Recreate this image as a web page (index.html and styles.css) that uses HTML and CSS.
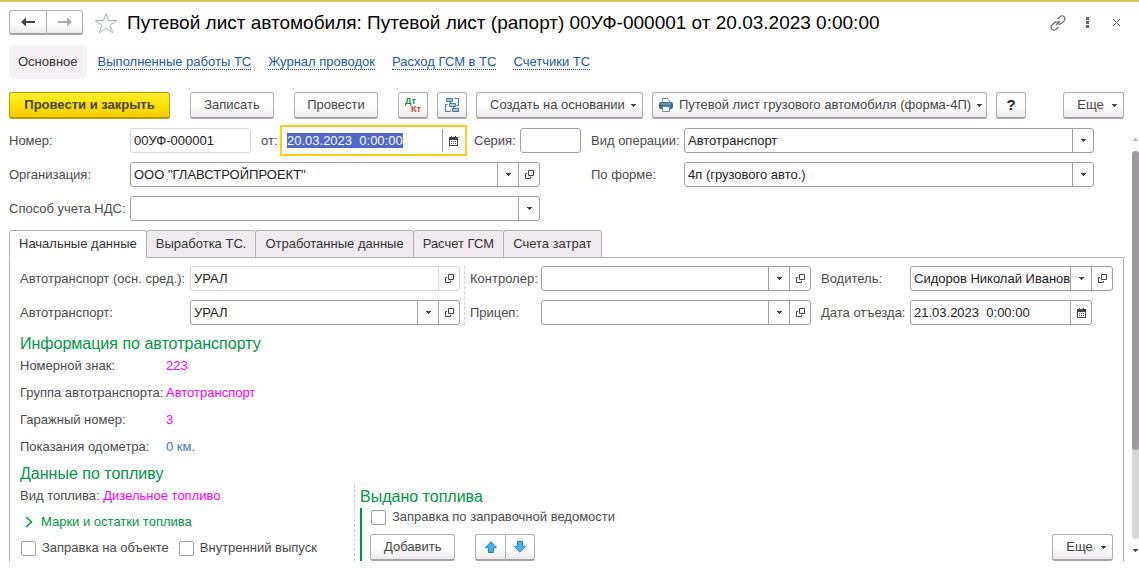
FILE: index.html
```html
<!DOCTYPE html>
<html lang="ru">
<head>
<meta charset="utf-8">
<title>Путевой лист автомобиля</title>
<link rel="stylesheet" href="styles.css">
</head>
<body>
<svg class="defs" aria-hidden="true">
  <symbol id="caret" viewBox="0 0 5 3"><path d="M0 0h5v1H4v1H3v1H2V2H1V1H0z" fill="currentColor"/></symbol>
  <symbol id="open" viewBox="0 0 9 9"><path d="M3.500.5h5v5h-5zM2 3.500H.5v5h5V7" fill="none" stroke="currentColor"/></symbol>
  <symbol id="calendar" viewBox="0 0 9 10"><path d="M0 1h2V0h1v1h3V0h1v1h2v9H0zM1 4v5h7V4z" fill="currentColor" fill-rule="evenodd"/><path d="M2 5h1v1H2zM4 5h1v1H4zM6 5h1v1H6zM2 7h1v1H2zM4 7h1v1H4zM6 7h1v1H6z" fill="currentColor"/></symbol>
  <symbol id="arrow" viewBox="0 0 14 10"><path d="M0 5L5 .5V4h9v2H5v3.500z" fill="currentColor"/></symbol>
  <symbol id="move" viewBox="0 0 12 12"><path d="M6 .8L11.200 6v.8H8.500v4.700h-5V6.800H.8V6z" fill="#45b0f0" stroke="#2f7fb5"/></symbol>
</svg>
<div class="window">
  <header class="header">
    <div class="pair history">
      <button class="btn" aria-label="Назад"><svg class="i-arrow"><use href="#arrow"/></svg></button>
      <button class="btn forward" aria-label="Вперед"><svg class="i-arrow flip"><use href="#arrow"/></svg></button>
    </div>
    <button class="plain star" aria-label="В избранное"><svg width="24" height="22" viewBox="0 0 24 22"><path d="M12 1.500l2.600 7h8l-6.400 4.600 2.500 7.700L12 16l-6.700 4.800 2.500-7.700L1.400 8.500h8z" fill="none" stroke="#a9b0bd"/></svg></button>
    <h1 class="title">Путевой лист автомобиля: Путевой лист (рапорт) 00УФ-000001 от 20.03.2023 0:00:00</h1>
    <div class="tools">
      <button class="plain" aria-label="Ссылка"><svg width="16" height="16" viewBox="0 0 16 16" fill="none" stroke="#666" stroke-width="1.200"><path d="M7.500 4L10 1.600q2.200-1.700 4 0t.2 4L11.500 8.300q-1.600 1.400-3.200.4M8.500 12L6 14.400q-2.200 1.700-4 0t-.2-4l2.700-2.700q1.600-1.400 3.200-.4M6 10l4-4"/></svg></button>
      <button class="plain" aria-label="Меню"><svg width="3" height="11" viewBox="0 0 3 11"><path d="M0 0h3v3H0zM0 4h3v3H0zM0 8h3v3H0z" fill="#666"/></svg></button>
      <button class="plain" aria-label="Закрыть"><svg width="7" height="7" viewBox="0 0 7 7"><path d="M0 0l7 7M7 0L0 7" stroke="#555"/></svg></button>
    </div>
  </header>

  <nav class="nav">
    <span class="current">Основное</span>
    <a href="#works">Выполненные работы ТС</a>
    <a href="#journal">Журнал проводок</a>
    <a href="#fuel">Расход ГСМ в ТС</a>
    <a href="#counters">Счетчики ТС</a>
  </nav>

  <div class="toolbar">
    <button class="btn primary">Провести и закрыть</button>
    <button class="btn spaced">Записать</button>
    <button class="btn spaced">Провести</button>
    <button class="btn square spaced" aria-label="Проводки"><span class="dtkt"><span class="dt">Дт</span><span class="kt">Кт</span></span></button>
    <button class="btn square" aria-label="Структура"><svg width="15" height="15" viewBox="0 0 15 15" fill="#a9cbe3" stroke="#44789f"><path d="M1.500.5h6v3h-6zM4.500 5.500h6v3h-6zM7.500 10.500h6v3h-6z"/><path d="M9.500.5h4v7h-2M.5 6v7.500h5M5.500 4v1M8.500 9v1M.5 6.500h2" fill="none"/></svg></button>
    <button class="btn menu">Создать на основании<svg class="i-caret"><use href="#caret"/></svg></button>
    <button class="btn menu print"><svg width="14" height="14" viewBox="0 0 14 14"><path d="M3.500 4.500v-4h5l2 2v2" fill="#fff" stroke="#6f8fa8"/><rect y="4" width="14" height="7" rx="2" fill="#376d96"/><path d="M2 6h10" stroke="#9dbdd4"/><path d="M3.500 8.500h7v5h-7z" fill="#fff" stroke="#6f8fa8"/></svg>Путевой лист грузового автомобиля (форма-4П)<svg class="i-caret"><use href="#caret"/></svg></button>
    <button class="btn square help">?</button>
    <button class="btn menu more">Еще<svg class="i-caret"><use href="#caret"/></svg></button>
  </div>

  <div class="scroll">
    <main class="content">
      <div class="form">
        <div class="col left">
          <div class="row">
            <label class="lbl" for="num">Номер:</label>
            <div class="field muted num"><input id="num" value="00УФ-000001" readonly></div>
            <label class="from" for="date">от:</label>
            <div class="field focused"><input id="date" value="20.03.2023  0:00:00" autofocus><button aria-label="Календарь"><svg class="i-cal"><use href="#calendar"/></svg></button></div>
            <label class="series" for="ser">Серия:</label>
            <div class="field grow"><input id="ser"></div>
          </div>
          <div class="row short">
            <label class="lbl" for="org">Организация:</label>
            <div class="field grow"><input id="org" value='ООО "ГЛАВСТРОЙПРОЕКТ"'><button aria-label="Выбрать"><svg class="i-caret"><use href="#caret"/></svg></button><button aria-label="Открыть"><svg class="i-open"><use href="#open"/></svg></button></div>
          </div>
          <div class="row short">
            <label class="lbl" for="vat">Способ учета НДС:</label>
            <div class="field grow"><select id="vat"><option></option></select><span class="mark"><svg class="i-caret"><use href="#caret"/></svg></span></div>
          </div>
        </div>
        <div class="col right">
          <div class="row">
            <label class="lbl" for="op">Вид операции:</label>
            <div class="field grow"><select id="op"><option>Автотранспорт</option></select><span class="mark"><svg class="i-caret"><use href="#caret"/></svg></span></div>
          </div>
          <div class="row">
            <label class="lbl" for="shape">По форме:</label>
            <div class="field grow"><select id="shape"><option>4п (грузового авто.)</option></select><span class="mark"><svg class="i-caret"><use href="#caret"/></svg></span></div>
          </div>
        </div>
      </div>

      <div class="tabs" role="tablist">
        <button class="tab active" role="tab" aria-selected="true">Начальные данные</button>
        <button class="tab" role="tab">Выработка ТС.</button>
        <button class="tab" role="tab">Отработанные данные</button>
        <button class="tab" role="tab">Расчет ГСМ</button>
        <button class="tab" role="tab">Счета затрат</button>
      </div>

      <section class="panel">
        <div class="grid">
          <div class="col vehicle">
            <div class="row">
              <label class="lbl" for="os">Автотранспорт (осн. сред.):</label>
              <div class="field muted grow"><input id="os" value="УРАЛ" readonly><button aria-label="Открыть"><svg class="i-open"><use href="#open"/></svg></button></div>
            </div>
            <div class="row">
              <label class="lbl" for="auto">Автотранспорт:</label>
              <div class="field grow"><input id="auto" value="УРАЛ"><button aria-label="Выбрать"><svg class="i-caret"><use href="#caret"/></svg></button><button aria-label="Открыть"><svg class="i-open"><use href="#open"/></svg></button></div>
            </div>
          </div>
          <div class="col control">
            <div class="row">
              <label class="lbl" for="ctl">Контролер:</label>
              <div class="field grow"><input id="ctl"><button aria-label="Выбрать"><svg class="i-caret"><use href="#caret"/></svg></button><button aria-label="Открыть"><svg class="i-open"><use href="#open"/></svg></button></div>
            </div>
            <div class="row">
              <label class="lbl" for="trl">Прицеп:</label>
              <div class="field grow"><input id="trl"><button aria-label="Выбрать"><svg class="i-caret"><use href="#caret"/></svg></button><button aria-label="Открыть"><svg class="i-open"><use href="#open"/></svg></button></div>
            </div>
          </div>
          <div class="col driver">
            <div class="row">
              <label class="lbl" for="drv">Водитель:</label>
              <div class="field grow"><input id="drv" value="Сидоров Николай Иванов"><button aria-label="Выбрать"><svg class="i-caret"><use href="#caret"/></svg></button><button aria-label="Открыть"><svg class="i-open"><use href="#open"/></svg></button></div>
            </div>
            <div class="row depart">
              <label class="lbl" for="dep">Дата отъезда:</label>
              <div class="field grow"><input id="dep" value="21.03.2023  0:00:00"><button aria-label="Календарь"><svg class="i-cal"><use href="#calendar"/></svg></button></div>
            </div>
          </div>
        </div>

        <h2 class="heading">Информация по автотранспорту</h2>
        <dl class="info">
          <dt>Номерной знак:</dt><dd>223</dd>
          <dt>Группа автотранспорта:</dt><dd>Автотранспорт</dd>
          <dt>Гаражный номер:</dt><dd>3</dd>
          <dt>Показания одометра:</dt><dd class="odo">0 км.</dd>
        </dl>
        <h2 class="heading">Данные по топливу</h2>
        <div class="fuel">
          <div class="stock">
            <p class="kind">Вид топлива: <span class="value">Дизельное топливо</span></p>
            <button class="plain expand"><svg width="8" height="12" viewBox="0 0 8 12"><path d="M1 1l5.500 5L1 11" fill="none" stroke="#009646" stroke-width="1.600"/></svg>Марки и остатки топлива</button>
            <div class="checks">
              <label class="check"><input type="checkbox">Заправка на объекте</label>
              <label class="check"><input type="checkbox">Внутренний выпуск</label>
            </div>
          </div>
          <div class="issued">
            <h2 class="heading">Выдано топлива</h2>
            <div class="group">
              <label class="check"><input type="checkbox">Заправка по заправочной ведомости</label>
              <div class="actions">
                <button class="btn">Добавить</button>
                <div class="pair">
                  <button class="btn" aria-label="Вверх"><svg class="i-move"><use href="#move"/></svg></button>
                  <button class="btn" aria-label="Вниз"><svg class="i-move down"><use href="#move"/></svg></button>
                </div>
                <button class="btn menu more">Еще<svg class="i-caret"><use href="#caret"/></svg></button>
              </div>
            </div>
          </div>
        </div>
      </section>
    </main>
    <div class="scrollbar" aria-hidden="true">
      <svg class="i-caret up"><use href="#caret"/></svg>
      <div class="track"><div class="thumb"></div></div>
      <svg class="i-caret"><use href="#caret"/></svg>
    </div>
  </div>
</div>
<script src="main.js"></script>
</body>
</html>
```
FILE: styles.css
```css
* { box-sizing: border-box; }
body {
  margin: 0;
  background: #fff;
  color: #4a4a4a;
  font: 13px/22px "Liberation Sans", Arial, sans-serif;
}
button, input, select { font: inherit; color: inherit; margin: 0; }
h1, h2, p, dl, dd { margin: 0; font-weight: normal; }
svg { flex: none; display: block; }
.defs { display: none; }
.window { border-top: 2px solid #d9c45f; }

.i-caret { width: 5px; height: 3px; }
.i-open { width: 9px; height: 9px; }
.i-cal { width: 9px; height: 10px; }
.i-arrow { width: 14px; height: 10px; }
.i-move { width: 12px; height: 12px; }
.flip { transform: scaleX(-1); }
.down, .up { transform: scaleY(-1); }

.plain { border: 0; padding: 0; background: none; }
.btn {
  display: flex;
  align-items: center;
  justify-content: center;
  height: 27px;
  padding: 0 13px;
  border: 1px solid #b0b0b0;
  border-bottom: 2px solid #a3a3a3;
  border-radius: 3px;
  background: linear-gradient(#fff 55%, #ece9ec);
  color: #444;
  white-space: nowrap;
}
.pair { display: flex; }
.pair .btn { width: 31px; padding: 0; }
.pair .btn:first-child { border-radius: 3px 0 0 3px; }
.pair .btn:last-child { border-radius: 0 3px 3px 0; border-left: 0; width: 29px; }

.header { display: flex; align-items: center; padding: 8px 19px 0 9px; }
.history .btn { height: 25px; }
.history .btn:first-child { width: 38px; }
.history .btn:last-child { width: 36px; }
.forward { color: #aaa; }
.star { margin: 0 9px 0 11px; }
.title { flex: 1; font-size: 19px; line-height: 25px; color: #000; white-space: nowrap; }
.tools { display: flex; align-items: center; gap: 20px; }
.tools .plain:nth-child(2) { margin-right: 4px; }

.nav { display: flex; align-items: center; gap: 17px; padding: 10px 9px 0; }
.nav .current { padding: 6px 9px; margin-right: -6px; border-radius: 4px; background: #f5f1f5; color: #333; }
.nav a { color: #1a58ab; line-height: 14px; text-decoration: none; border-bottom: 1px dotted #1a58ab; }

.toolbar { display: flex; gap: 9px; padding: 13px 15px 0 9px; }
.toolbar .spaced { margin-left: 11px; }
.toolbar .spaced:not(.square) { min-width: 84px; padding: 0; }
.btn.primary {
  min-width: 161px;
  font-weight: bold;
  border-color: #b79c00;
  background: linear-gradient(#ffee33, #ffe000 50%, #f2cd00);
}
.square { width: 30px; padding: 0; }
.menu { gap: 6px; padding-right: 6px; }
.print { padding: 0 4px 0 6px; }
.help { font-weight: bold; font-size: 15px; color: #222; }
.more { gap: 8px; min-width: 61px; margin-left: auto; }
.dtkt { display: flex; flex-direction: column; width: 16px; font-size: 9px; line-height: 8px; font-weight: bold; }
.dt { color: #159244; text-align: left; }
.kt { color: #e03c3c; text-align: right; }

.scroll { display: flex; justify-content: space-between; padding-top: 9px; }
.content { flex: 1; padding-left: 9px; min-width: 0; }
.form { display: grid; grid-template-columns: 572fr 503fr; gap: 10px; padding-right: 30px; }
.col { display: flex; flex-direction: column; gap: 9px; min-width: 0; }
.row { display: flex; align-items: center; height: 25px; white-space: nowrap; }
.lbl { flex: none; }
.left .lbl { width: 121px; }
.right .lbl { width: 93px; }
.short { padding-right: 41px; }
.grow { flex: 1; min-width: 0; }
.num { width: 121px; }
.from { margin-left: 10px; width: 22px; }
.series { margin-left: 10px; width: 46px; }

.field { display: flex; height: 25px; border: 1px solid #a0a0a0; border-radius: 3px; background: #fff; color: #222; }
.field input, .field select {
  flex: 1;
  min-width: 0;
  width: 100%;
  height: 23px;
  padding: 0 0 0 3px;
  border: 0;
  outline: 0;
  background: none;
  appearance: none;
}
.field button, .mark {
  display: flex;
  flex: none;
  align-items: center;
  justify-content: center;
  width: 21px;
  padding: 0;
  border: 0;
  border-left: 1px solid #a0a0a0;
  background: none;
  color: #444;
}
.muted, .muted button { border-color: #d6d6d6; }
.focused { width: 181px; border-color: #fff; border-radius: 0; outline: 2px solid #ffd01a; outline-offset: 1px; }
.focused input::selection { background: #5068c8; color: #fff; }

.tabs { display: flex; padding-top: 9px; }
.tab {
  height: 28px;
  padding: 0 9px;
  margin-right: -1px;
  border: 1px solid #b0b0b0;
  border-radius: 3px 3px 0 0;
  background: #efebef;
  color: #333;
  white-space: nowrap;
}
.tab.active { background: #fff; border-bottom-color: #fff; position: relative; }
.panel { margin-top: -1px; padding: 8px 10px 0; border: 1px solid #b0b0b0; border-bottom: 0; }
.grid { display: grid; grid-template-columns: 445fr 341fr 297fr; column-gap: 5px; }
.vehicle { border-right: 1px dashed #d0d0d0; padding-right: 4px; }
.vehicle .lbl { width: 170px; }
.control .lbl { width: 71px; }
.driver { padding-left: 5px; }
.driver .lbl { width: 89px; }
.depart { padding-right: 21px; }

.heading { font-size: 16px; line-height: 22px; color: #009646; }
.grid + .heading { margin-top: 8px; }
.info { display: grid; grid-template-columns: 146px 1fr; row-gap: 5px; margin-bottom: 5px; white-space: nowrap; }
.info dd, .value { color: #f0f; }
.info .odo { color: #3a7ab8; }
.fuel { display: flex; }
.stock { display: flex; flex-direction: column; align-items: flex-start; gap: 4px; width: 335px; border-right: 1px dashed #d0d0d0; }
.expand { display: flex; align-items: center; gap: 8px; padding-left: 5px; color: #009646; line-height: 22px; }
.checks { display: flex; gap: 10px; padding-left: 1px; }
.check { display: flex; align-items: center; gap: 6px; white-space: nowrap; }
.check input { appearance: none; width: 15px; height: 15px; margin: 0; border: 1px solid #a0a0a0; border-radius: 2px; background: #fff; }
.issued { flex: 1; padding-left: 5px; }
.issued .heading { line-height: 23px; }
.group { border-left: 2px solid #009646; padding-left: 8px; }
.group .check { height: 18px; margin-left: 1px; }
.actions { display: flex; padding-top: 8px; }
.actions .pair { margin-left: 20px; }

.scrollbar { display: flex; flex-direction: column; align-items: center; width: 7px; margin: 10px 0 9px 8px; color: #444; }
.scrollbar .up { color: #bbb; }
.track { flex: 1; width: 7px; margin: 10px 0; border-radius: 4px; background: #d6d6d6; }
.thumb { height: 77%; border-radius: 4px; background: #9c9a9d; }
```
FILE: main.js
```js
const date = document.getElementById('date');
date.focus();
date.select();
```
